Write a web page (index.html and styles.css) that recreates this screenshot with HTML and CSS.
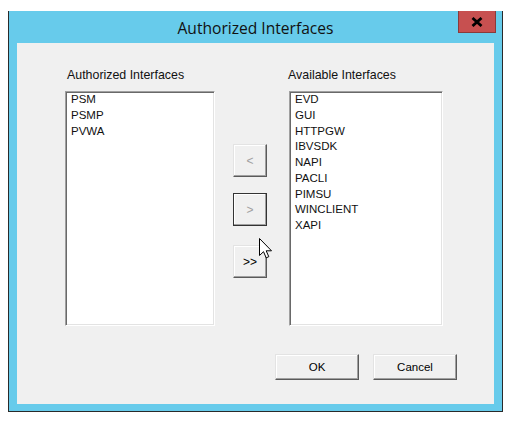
FILE: index.html
```html
<!DOCTYPE html>
<html>
<head>
<meta charset="utf-8">
<link rel="stylesheet" href="styles.css">
</head>
<body>
<div class="window">
  <div class="titlebar">
    <div class="title">Authorized Interfaces</div>
    <button class="close" aria-label="Close">
      <svg width="12" height="10" viewBox="0 0 12 10"><path d="M1.5 1 L10.5 9 M10.5 1 L1.5 9" stroke="#000" stroke-width="2.8" fill="none"/></svg>
    </button>
  </div>
  <div class="client">
    <div class="panes">
      <div class="label label-left">Authorized Interfaces</div>
      <div class="spacer"></div>
      <div class="label label-right">Available Interfaces</div>
      <ul class="list list-left">
        <li>PSM</li>
        <li>PSMP</li>
        <li>PVWA</li>
      </ul>
      <div class="movers">
        <button class="btn mover disabled">&lt;</button>
        <button class="btn mover disabled focused b2">&gt;</button>
        <button class="btn mover b3">&gt;&gt;</button>
      </div>
      <ul class="list list-right">
        <li>EVD</li>
        <li>GUI</li>
        <li>HTTPGW</li>
        <li>IBVSDK</li>
        <li>NAPI</li>
        <li>PACLI</li>
        <li>PIMSU</li>
        <li>WINCLIENT</li>
        <li>XAPI</li>
      </ul>
    </div>
    <div class="actions">
      <button class="btn action">OK</button>
      <button class="btn action">Cancel</button>
    </div>
    <svg class="cursor" width="14" height="22" viewBox="0 0 14 22"><path d="M0.5 0.5 L0.5 17.5 L4.5 13.7 L7.2 19.8 L9.8 18.7 L7.2 12.8 L12.5 12.8 Z" fill="#fff" stroke="#000" stroke-width="1" stroke-linejoin="miter"/></svg>
  </div>
</div>
</body>
</html>
```
FILE: styles.css
```css
* { box-sizing: border-box; }
html, body { margin: 0; padding: 0; background: #ffffff; }
body { width: 511px; height: 422px; overflow: hidden; }

.window {
  margin: 11px 0 0 8px;
  width: 495px;
  height: 401px;
  background: #67cbeb;
  border-left: 1px solid #2a2a2a;
  border-right: 1px solid #2a2a2a;
  border-bottom: 1px solid #2a2a2a;
  display: flex;
  flex-direction: column;
}

.titlebar {
  height: 32px;
  display: grid;
  grid-template-columns: 1fr auto 1fr;
  align-items: start;
}
.title {
  grid-column: 2;
  font-family: "Open Sans", "Noto Sans", sans-serif;
  font-size: 15.6px;
  color: #111;
  line-height: 20px;
  padding-top: 7px;
  white-space: nowrap;
}
.close {
  grid-column: 3;
  justify-self: end;
  margin: 0 6px 0 0;
  width: 38px;
  height: 22px;
  padding: 0;
  background: #c75050;
  border: 1px solid #8a3a3a;
  border-top: none;
  display: flex;
  align-items: center;
  justify-content: center;
}
.close svg { display: block; margin-top: 0; }

.client {
  position: relative;
  margin: 0 8px 7px 8px;
  height: 361px;
  background: #f0f0f0;
  padding: 25px 0 0 48px;
  font-family: "Liberation Sans", Arial, sans-serif;
  font-size: 11.5px;
  color: #000;
}

.panes {
  display: grid;
  grid-template-columns: 150px 18px 34px 22px 154px;
  grid-template-rows: 23px 235px;
}
.label { font-size: 12.4px; line-height: 15px; color: #111; white-space: nowrap; }
.label-left { grid-column: 1; padding-left: 2px; }
.spacer { grid-column: 2 / 5; }
.label-right { grid-column: 5; margin-left: -1px; }

.list {
  margin: 0;
  padding: 0 0 0 4px;
  list-style: none;
  background: #fff;
  border: 1px solid;
  border-color: #a0a0a0 #ffffff #ffffff #a0a0a0;
  box-shadow: inset 1px 1px 0 #696969, inset -1px -1px 0 #e3e3e3;
  line-height: 15.75px;
  color: #111;
}
.list li { padding-left: 1px; }
.list-left { grid-column: 1; }
.movers {
  grid-column: 3;
  display: flex;
  flex-direction: column;
  padding-top: 53px;
}
.list-right { grid-column: 5; }

.btn {
  font-family: "Liberation Sans", Arial, sans-serif;
  font-size: 11.5px;
  background: #f0f0f0;
  color: #000;
  padding: 0;
  border: 1px solid;
  border-color: #e3e3e3 #5a5a5a #5a5a5a #e3e3e3;
  box-shadow: inset -1px -1px 0 #a0a0a0, inset 1px 1px 0 #ffffff;
}
.mover { width: 34px; height: 33px; font-size: 12px; }
.b2 { margin-top: 16px; }
.b3 { margin-top: 19px; }
.disabled { color: #a0a0a0; }
.focused { border-color: #333; }

.actions {
  display: flex;
  gap: 14px;
  margin-top: 28px;
  padding-left: 210px;
}
.action { width: 84px; height: 26px; }

.cursor {
  position: absolute;
  left: 242px;
  top: 195px;
}
```
